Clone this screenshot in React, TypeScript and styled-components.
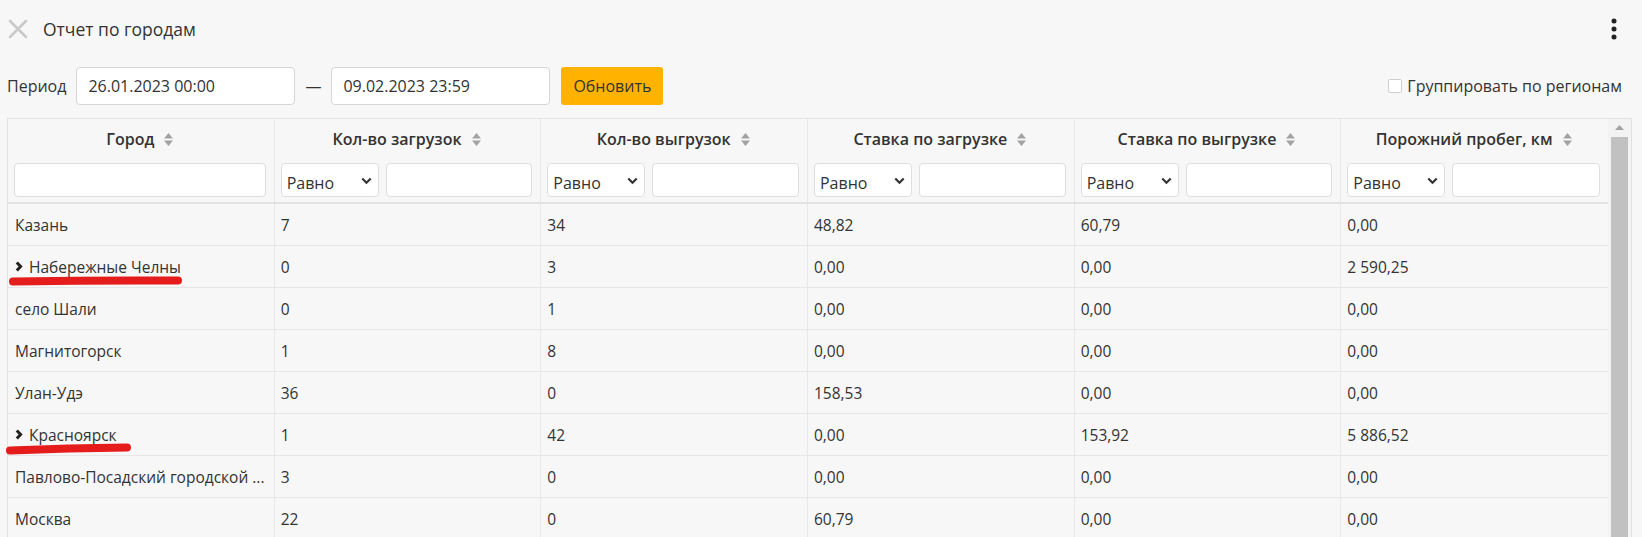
import React from 'react';
import styled, { createGlobalStyle } from 'styled-components';

const GlobalStyle = createGlobalStyle`
	html, body {
		margin: 0;
		background: #f7f7f7;
	}
	body {
		font-family: "Open Sans", "Noto Sans", sans-serif;
		color: #333;
		overflow: hidden;
	}
	* {
		box-sizing: border-box;
	}
`;

type Row = {
	city: string;
	expandable?: boolean;
	mark?: 'long' | 'short';
	values: string[];
};

const rows: Row[] = [
	{ city: 'Казань', values: ['7', '34', '48,82', '60,79', '0,00'] },
	{ city: 'Набережные Челны', expandable: true, mark: 'long', values: ['0', '3', '0,00', '0,00', '2 590,25'] },
	{ city: 'село Шали', values: ['0', '1', '0,00', '0,00', '0,00'] },
	{ city: 'Магнитогорск', values: ['1', '8', '0,00', '0,00', '0,00'] },
	{ city: 'Улан-Удэ', values: ['36', '0', '158,53', '0,00', '0,00'] },
	{ city: 'Красноярск', expandable: true, mark: 'short', values: ['1', '42', '0,00', '153,92', '5 886,52'] },
	{ city: 'Павлово-Посадский городской ...', values: ['3', '0', '0,00', '0,00', '0,00'] },
	{ city: 'Москва', values: ['22', '0', '60,79', '0,00', '0,00'] }
];

const columns = [
	'Город',
	'Кол-во загрузок',
	'Кол-во выгрузок',
	'Ставка по загрузке',
	'Ставка по выгрузке',
	'Порожний пробег, км'
];

export default function App() {
	return (
		<>
			<GlobalStyle />
			<Page>
				<TitleBar>
					<CloseButton aria-label="Закрыть">
						<svg width="20" height="20" viewBox="0 0 20 20">
							<path d="M2 2 L18 18 M18 2 L2 18" stroke="#c9c9c9" strokeWidth="2.6" strokeLinecap="round" />
						</svg>
					</CloseButton>
					<Title>Отчет по городам</Title>
					<MenuButton aria-label="Меню">
						<svg width="8" height="22" viewBox="0 0 8 22">
							<circle cx="4" cy="3" r="2.5" fill="#222" />
							<circle cx="4" cy="11" r="2.5" fill="#222" />
							<circle cx="4" cy="19" r="2.5" fill="#222" />
						</svg>
					</MenuButton>
				</TitleBar>

				<Toolbar>
					<Label>Период</Label>
					<DateInput defaultValue="26.01.2023 00:00" />
					<Dash>—</Dash>
					<DateInput defaultValue="09.02.2023 23:59" />
					<RefreshButton>Обновить</RefreshButton>
					<GroupToggle>
						<CheckBox type="checkbox" />
						Группировать по регионам
					</GroupToggle>
				</Toolbar>

				<TableFrame>
					<Table>
						<HeaderRow>
							{columns.map((title, i) => (
								<HeaderCell key={title}>
									<HeaderTitle>
										{title}
										<SortIcon width="9" height="13" viewBox="0 0 9 13">
											<path d="M4.5 0 L9 5.5 L0 5.5 Z M4.5 13 L9 7.5 L0 7.5 Z" fill="#a3a3a3" />
										</SortIcon>
									</HeaderTitle>
									{i === 0 ? (
										<FilterRow $single>
											<FilterInput />
										</FilterRow>
									) : (
										<FilterRow>
											<SelectWrap>
												<Select defaultValue="eq">
													<option value="eq">Равно</option>
													<option value="gt">Больше</option>
													<option value="lt">Меньше</option>
												</Select>
												<SelectArrow width="11" height="8" viewBox="0 0 11 8">
													<path d="M1.3 1.5 L5.5 5.7 L9.7 1.5" stroke="#333" strokeWidth="2.2" fill="none" />
												</SelectArrow>
											</SelectWrap>
											<FilterInput />
										</FilterRow>
									)}
								</HeaderCell>
							))}
						</HeaderRow>
						{rows.map((row) => (
							<BodyRow key={row.city}>
								<CityCell>
									{row.expandable && (
										<Chevron width="8" height="11" viewBox="0 0 8 11">
											<path d="M1.8 1.5 L5.6 5.5 L1.8 9.5" stroke="#222" strokeWidth="3" fill="none" />
										</Chevron>
									)}
									<CityName>{row.city}</CityName>
									{row.mark === 'long' && (
										<Underline width="182" height="14" viewBox="0 0 182 14" $left={0} $top={28}>
											<path d="M5 7.5 Q88 6 170 6.5" stroke="#e51c1c" strokeWidth="8" strokeLinecap="round" fill="none" />
										</Underline>
									)}
									{row.mark === 'short' && (
										<Underline width="132" height="14" viewBox="0 0 132 14" $left={-2} $top={28}>
											<path d="M4 8.5 Q62 6 121 5.5" stroke="#e51c1c" strokeWidth="8" strokeLinecap="round" fill="none" />
										</Underline>
									)}
								</CityCell>
								{row.values.map((v, i) => (
									<Cell key={i}>{v}</Cell>
								))}
							</BodyRow>
						))}
					</Table>
					<ScrollBar>
						<ScrollArrow width="9" height="5" viewBox="0 0 9 5">
							<path d="M4.5 0 L9 5 L0 5 Z" fill="#a3a3a3" />
						</ScrollArrow>
						<ScrollThumb />
					</ScrollBar>
				</TableFrame>
			</Page>
		</>
	);
}

const Page = styled.div`
	height: 537px;
	padding: 0 10px 0 7px;
	overflow: hidden;
`;

const TitleBar = styled.div`
	display: flex;
	align-items: center;
	height: 56px;
	padding-top: 1px;
`;

const CloseButton = styled.button`
	display: flex;
	width: 22px;
	height: 22px;
	padding: 1px 0 0 1px;
	border: none;
	background: none;
	cursor: pointer;
`;

const Title = styled.h1`
	margin: 0 0 0 14px;
	font-size: 17.5px;
	font-weight: 400;
	color: #333;
`;

const MenuButton = styled.button`
	display: flex;
	align-items: center;
	justify-content: center;
	width: 20px;
	height: 26px;
	margin-left: auto;
	margin-right: 8px;
	padding: 0;
	border: none;
	background: none;
`;

const Toolbar = styled.div`
	display: flex;
	align-items: center;
	height: 38px;
	margin-top: 11px;
	margin-right: 10px;
	font-size: 16px;
`;

const Label = styled.span`
	margin-right: 10px;
	color: #333;
`;

const DateInput = styled.input`
	width: 219px;
	height: 38px;
	padding: 0 11px;
	border: 1px solid #d6d6d6;
	border-radius: 4px;
	background: #fff;
	font: inherit;
	color: #333;
`;

const Dash = styled.span`
	margin: 0 10px;
	color: #333;
`;

const RefreshButton = styled.button`
	width: 102px;
	height: 38px;
	margin-left: 11px;
	padding: 0;
	border: none;
	border-radius: 3px;
	background: #ffb300;
	font: inherit;
	color: #333;
`;

const GroupToggle = styled.label`
	display: flex;
	align-items: center;
	margin-left: auto;
	color: #333;
`;

const CheckBox = styled.input`
	appearance: none;
	width: 14px;
	height: 14px;
	margin: 0 5px 0 0;
	border: 1px solid #cfcfcf;
	border-radius: 2px;
	background: #fff;
`;

const TableFrame = styled.div`
	display: flex;
	margin-top: 13px;
	border: 1px solid #e2e2e2;
	border-bottom: none;
	height: 419px;
`;

const Table = styled.div`
	flex: 1;
	min-width: 0;
	font-size: 15.5px;
`;

const HeaderRow = styled.div`
	display: grid;
	grid-template-columns: repeat(6, minmax(0, 1fr));
	border-bottom: 2px solid #e3e3e3;
`;

const HeaderCell = styled.div`
	display: flex;
	flex-direction: column;
	padding: 0 8px 5px 6px;
	border-right: 1px solid #e8e8e8;

	&:last-child {
		border-right: none;
	}
`;

const HeaderTitle = styled.div`
	display: flex;
	align-items: center;
	justify-content: center;
	height: 40px;
	font-size: 16px;
	font-weight: 600;
	color: #333;
	white-space: nowrap;
`;

const SortIcon = styled.svg`
	margin-left: 10px;
	flex-shrink: 0;
`;

const FilterRow = styled.div<{ $single?: boolean }>`
	display: grid;
	grid-template-columns: ${(p) => (p.$single ? 'minmax(0, 1fr)' : '98px minmax(0, 1fr)')};
	gap: 7px;
	height: 34px;
	margin-top: 4px;
`;

const FilterInput = styled.input`
	min-width: 0;
	height: 34px;
	border: 1px solid #dedede;
	border-radius: 4px;
	background: #fff;
`;

const SelectWrap = styled.div`
	position: relative;
`;

const Select = styled.select`
	appearance: none;
	width: 100%;
	height: 34px;
	padding: 5px 0 0 5px;
	border: 1px solid #dedede;
	border-radius: 4px;
	background: #fff;
	font-family: inherit;
	font-size: 16px;
	color: #333;
`;

const SelectArrow = styled.svg`
	position: absolute;
	right: 7px;
	top: 14px;
	pointer-events: none;
`;

const BodyRow = styled.div`
	display: grid;
	grid-template-columns: repeat(6, minmax(0, 1fr));
	height: 42px;
	border-bottom: 1px solid #e6e6e6;
`;

const Cell = styled.div`
	display: flex;
	align-items: center;
	min-width: 0;
	padding: 0 8px 0 6px;
	border-right: 1px solid #e8e8e8;
	white-space: nowrap;
	overflow: hidden;

	&:last-child {
		border-right: none;
	}
`;

const CityCell = styled(Cell)`
	position: relative;
	overflow: visible;
	padding-left: 7px;
`;

const CityName = styled.span`
	min-width: 0;
	overflow: hidden;
	text-overflow: ellipsis;
	white-space: nowrap;
`;

const Chevron = styled.svg`
	flex-shrink: 0;
	margin-right: 6px;
`;

const Underline = styled.svg<{ $left: number; $top: number }>`
	position: absolute;
	left: ${(p) => p.$left}px;
	top: ${(p) => p.$top}px;
	pointer-events: none;
`;

const ScrollBar = styled.div`
	display: flex;
	flex-direction: column;
	align-items: center;
	width: 23px;
	padding: 0 3px;
	background: #f3f3f3;
`;

const ScrollArrow = styled.svg`
	margin: 6px 0 7px;
`;

const ScrollThumb = styled.div`
	flex: 1;
	width: 17px;
	background: #c1c1c1;
`;
